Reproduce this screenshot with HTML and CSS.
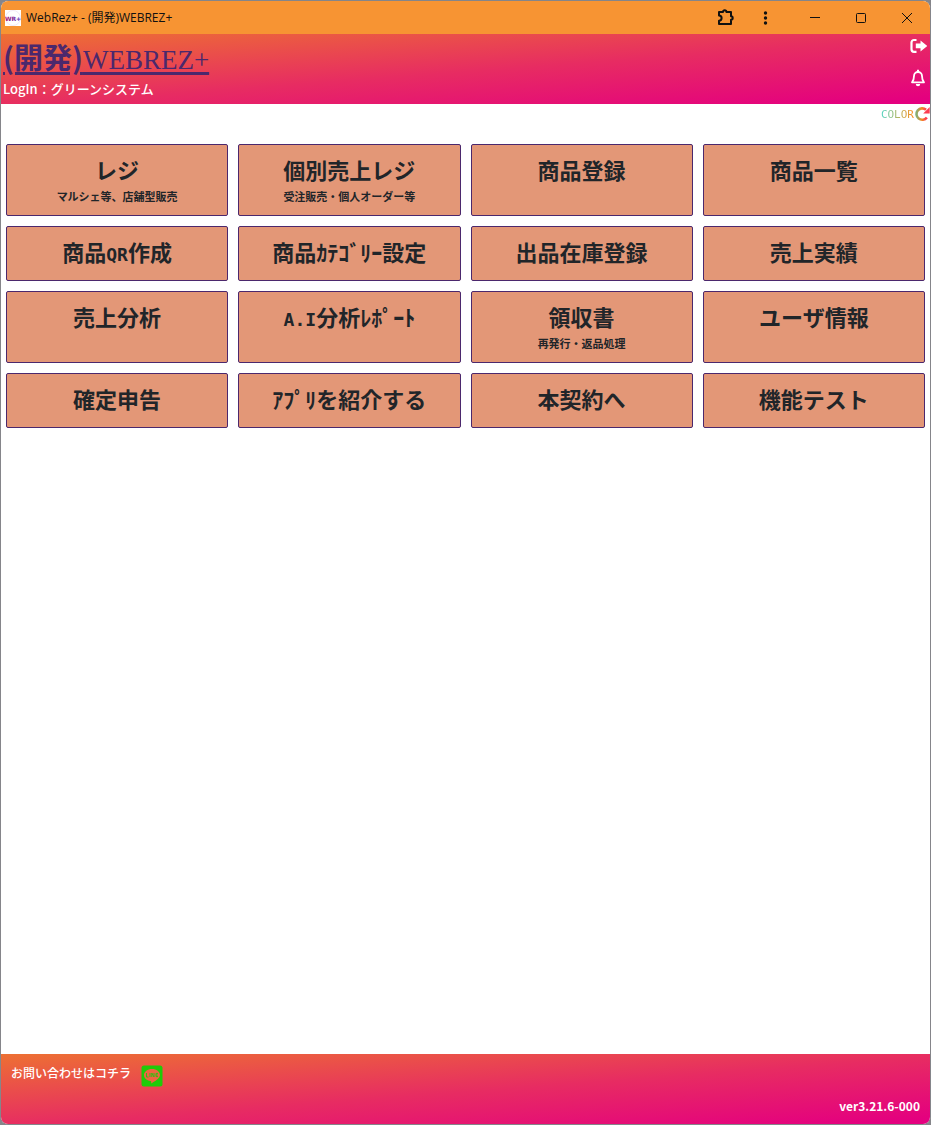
FILE: index.html
```html
<!DOCTYPE html>
<html lang="ja">
<head>
<meta charset="utf-8">
<meta name="viewport" content="width=device-width, initial-scale=1">
<title>WebRez+ - (開発)WEBREZ+</title>
<link rel="stylesheet" href="styles.css">
</head>
<body>
<div class="window">
  <div class="titlebar">
    <svg class="favicon" viewBox="0 0 16 16" aria-hidden="true">
      <defs><linearGradient id="wr" x1="0" x2="1"><stop offset="0" stop-color="#b3126b"/><stop offset="1" stop-color="#4a2ac0"/></linearGradient></defs>
      <rect width="16" height="16" fill="#fff"/>
      <circle cx="8" cy="8" r="7.5" fill="none" stroke="#e8dcf0" stroke-width=".6"/>
      <text class="favicon-text" x="8" y="10.5" text-anchor="middle" fill="url(#wr)">WR+</text>
    </svg>
    <span class="window-title">WebRez+ - (開発)WEBREZ+</span>
    <div class="tools">
      <button class="tool" aria-label="拡張機能"><svg width="18" height="18" viewBox="0 0 18 18"><path d="M3 3h4a1.700 1.700 0 0 1 3.400 0H15v4.300a1.700 1.700 0 0 1 0 3.400V15H3V11.700a2.300 2.300 0 0 0 0-5.200z" fill="none" stroke="#111" stroke-width="2" stroke-linejoin="round"/></svg></button>
      <button class="tool" aria-label="メニュー"><svg width="18" height="18" viewBox="0 0 18 18"><g fill="#111"><circle cx="9.500" cy="4" r="1.700"/><circle cx="9.500" cy="9" r="1.700"/><circle cx="9.500" cy="14" r="1.700"/></g></svg></button>
    </div>
    <div class="controls">
      <button class="control" aria-label="最小化"><svg width="12" height="12" viewBox="0 0 12 12"><path d="M1 5.500h10" stroke="#111"/></svg></button>
      <button class="control" aria-label="最大化"><svg width="12" height="12" viewBox="0 0 12 12"><rect x="1.500" y="1.500" width="9" height="9" rx="1" fill="none" stroke="#111"/></svg></button>
      <button class="control" aria-label="閉じる"><svg width="12" height="12" viewBox="0 0 12 12"><path d="M1 1l10 10M11 1L1 11" stroke="#111"/></svg></button>
    </div>
  </div>

  <header class="header">
    <div class="brand-area">
      <h1 class="brand"><a href="#" class="brand-link">(開発)<span class="brand-latin">WEBREZ+</span></a></h1>
      <p class="login">LogIn：グリーンシステム</p>
    </div>
    <nav class="header-icons">
      <a href="#" class="icon-link" aria-label="ログアウト"><svg width="18" height="16" viewBox="0 0 18 16"><path d="M6.500 2H4a2.500 2.500 0 0 0-2.500 2.500v6.800a2.500 2.500 0 0 0 2.500 2.500h2.500" fill="none" stroke="#fff" stroke-width="2.200"/><path d="M5.800 5.500h4.700V2.400l6.800 5.500-6.800 5.500v-3.200H5.800z" fill="#fff"/></svg></a>
      <a href="#" class="icon-link" aria-label="お知らせ"><svg width="16" height="18" viewBox="0 0 16 18"><path d="M2 13.300c1.600-1.800 2-3.600 2-6.300a4 4 0 0 1 8 0c0 2.700.4 4.500 2 6.300z" fill="none" stroke="#fff" stroke-width="1.800" stroke-linejoin="round"/><path d="M8 .8v2.400" stroke="#fff" stroke-width="2"/><path d="M5.800 15h4.400a2.200 2.200 0 0 1-4.400 0z" fill="#fff"/></svg></a>
    </nav>
  </header>

  <main class="main">
    <div class="color-row">
      <button class="color-button"><span class="color-label">COLOR</span><svg width="16" height="16" viewBox="0 0 16 16" aria-hidden="true"><defs><linearGradient id="turn" x1="0" x2="1"><stop offset="0" stop-color="#86ad72"/><stop offset=".5" stop-color="#f28b22"/><stop offset="1" stop-color="#ff3158"/></linearGradient></defs><path d="M12.800 11.400A5.700 5.700 0 1 1 12 3.800" fill="none" stroke="url(#turn)" stroke-width="2.600"/><path d="M15.700 1v6.500H9.200z" fill="#fc3c50"/></svg></button>
    </div>
    <div class="menu">
      <button class="card"><span class="name">レジ</span><span class="note">マルシェ等、店舗型販売</span></button>
      <button class="card"><span class="name">個別売上レジ</span><span class="note">受注販売・個人オーダー等</span></button>
      <button class="card"><span class="name">商品登録</span></button>
      <button class="card"><span class="name">商品一覧</span></button>
      <button class="card"><span class="name">商品<span class="half-large">QR</span>作成</span></button>
      <button class="card"><span class="name">商品ｶﾃｺﾞﾘｰ設定</span></button>
      <button class="card"><span class="name">出品在庫登録</span></button>
      <button class="card"><span class="name">売上実績</span></button>
      <button class="card"><span class="name">売上分析</span></button>
      <button class="card"><span class="name"><span class="half-large">A.I</span>分析ﾚﾎﾟｰﾄ</span></button>
      <button class="card"><span class="name">領収書</span><span class="note">再発行・返品処理</span></button>
      <button class="card"><span class="name">ユーザ情報</span></button>
      <button class="card"><span class="name">確定申告</span></button>
      <button class="card"><span class="name">ｱﾌﾟﾘを紹介する</span></button>
      <button class="card"><span class="name">本契約へ</span></button>
      <button class="card"><span class="name">機能テスト</span></button>
    </div>
  </main>

  <footer class="footer">
    <div class="contact">
      <span>お問い合わせはコチラ</span>
      <a href="#" class="line-link" aria-label="LINE"><svg width="22" height="22" viewBox="0 0 22 22"><rect x=".5" y=".5" width="21" height="21" rx="2.500" fill="#1fcb08"/><path d="M11 4c-4.500 0-8 2.700-8 6.100 0 3.100 2.700 5.500 6.500 6 .9.200.9.800.6 2.300 3.300-1.600 8.900-4.800 8.900-8.300C19 6.700 15.500 4 11 4z" fill="#ee6540"/><path d="M5.500 8v4h2M9 8v4M10.800 12V8l2.200 4V8M17 8.400h-2v3.200h2M15 10h1.800" fill="none" stroke="#36bd10" stroke-width="1"/></svg></a>
    </div>
    <span class="version">ver3.21.6-000</span>
  </footer>
</div>
</body>
</html>
```
FILE: styles.css
```css
* {
  box-sizing: border-box;
}

body {
  margin: 0;
  background: #85858a;
  font-family: "Noto Sans CJK JP", sans-serif;
  color: #212529;
}

button {
  margin: 0;
  padding: 0;
  border: 0;
  background: none;
  font: inherit;
  color: inherit;
  cursor: pointer;
}

svg {
  display: block;
}

.window {
  display: flex;
  flex-direction: column;
  min-height: 100vh;
  border: 1px solid #85858a;
  border-radius: 8px;
  background: #fff;
  overflow: hidden;
}

.titlebar {
  display: flex;
  align-items: center;
  height: 33px;
  padding-left: 4px;
  background: #f79433;
}

.favicon {
  width: 16px;
  height: 16px;
}

.favicon-text {
  font: bold 6px "DejaVu Sans", sans-serif;
}

.window-title {
  margin-left: 5px;
  font-family: "Open Sans", "Noto Sans CJK JP", sans-serif;
  font-size: 12px;
  line-height: 16px;
  color: #111;
}

.tools {
  display: flex;
  gap: 22px;
  margin-left: auto;
  margin-right: 18px;
}

.controls {
  display: flex;
}

.control {
  display: flex;
  align-items: center;
  justify-content: center;
  width: 46px;
  height: 32px;
}

.header,
.footer {
  background: linear-gradient(to bottom right, #ed7033, #e72c62 52%, #e4007f 96%);
  color: #fff;
}

.header {
  display: flex;
  justify-content: space-between;
  height: 70px;
  padding: 0 2px;
}

.brand {
  margin: 0;
  font-size: 29px;
  line-height: 44px;
}

.brand-link {
  color: #4b286d;
  text-decoration-thickness: 3px;
  text-underline-offset: 3px;
}

.brand-latin {
  font-family: "Liberation Serif", serif;
  font-size: 27px;
  font-weight: normal;
  line-height: 1;
}

.login {
  margin: 0;
  font-size: 13px;
  font-weight: 500;
  line-height: 22px;
}

.color-label {
  font-family: "DejaVu Sans Mono", monospace;
  font-size: 11px;
}

.header-icons {
  display: flex;
  flex-direction: column;
  align-items: flex-start;
  gap: 15px;
  padding-top: 4px;
}

.main {
  flex: 1;
}

.color-row {
  display: flex;
  justify-content: flex-end;
  height: 20px;
}

.color-button {
  display: flex;
  align-items: center;
}

.color-label {
  background: linear-gradient(to right, #50d5c5, #b7b35b 55%, #ff8b1c);
  background-clip: text;
  color: transparent;
}

.menu {
  display: grid;
  grid-template-columns: repeat(4, 1fr);
  gap: 10px;
  margin-top: 20px;
  padding: 0 5px;
}

.card {
  display: flex;
  flex-direction: column;
  align-items: center;
  padding: 8px 4px 10px;
  border: 1px solid #4b286d;
  border-radius: 2px;
  background: #e39777;
  font-weight: bold;
}

.name {
  padding-bottom: 2px;
  font-size: 22px;
  line-height: 33px;
}

.half-large {
  font-family: "DejaVu Sans Mono", monospace;
  font-size: 18px;
  line-height: 1;
}

.note {
  font-size: 11px;
  line-height: 17px;
}

.footer {
  display: flex;
  flex-direction: column;
  justify-content: space-between;
  height: 70px;
  padding: 10px;
}

.contact {
  display: flex;
  gap: 10px;
  font-size: 12px;
  font-weight: 500;
  line-height: 18px;
}

.line-link {
  padding-top: 1px;
}

.version {
  align-self: flex-end;
  font-size: 12px;
  font-weight: bold;
  line-height: 16px;
}
```
